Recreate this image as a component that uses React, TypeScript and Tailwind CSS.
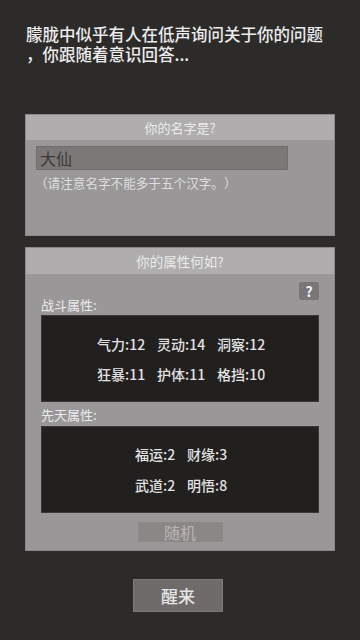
const combat = ["气力:12", "灵动:14", "洞察:12", "狂暴:11", "护体:11", "格挡:10"];
const innate = ["福运:2", "财缘:3", "武道:2", "明悟:8"];

const font = { fontFamily: '"Noto Sans CJK SC", "Noto Sans", sans-serif' };

const App = () => {
  return (
    <div
      className="w-[360px] h-[640px] bg-[#2d2b2a] flex flex-col overflow-hidden [text-spacing-trim:space-all]"
      style={font}
    >
      <p className="pt-[24px] px-[26px] text-[16.5px] leading-[20px] font-medium text-[#ececec]">
        朦胧中似乎有人在低声询问关于你的问题
        <br />
        ，你跟随着意识回答...
      </p>

      {/* name panel */}
      <div className="mt-[50px] mx-[25px] h-[122px] bg-[#999797] border border-[#8a8888] flex flex-col">
        <div className="h-[25px] bg-[#afadad] flex items-center justify-center text-[13px] text-[#ebebeb]">
          你的名字是?
        </div>
        <div className="mt-[6px] ml-[10px] w-[252px] h-[24px] bg-[#7b7877] border border-[#6f6c6b] flex items-center px-[3px] text-[16px] text-[#3b3938]">
          大仙
        </div>
        <p className="mt-[5px] ml-[9px] text-[12.6px] leading-[16px] text-[#dedede]">
          （请注意名字不能多于五个汉字。）
        </p>
      </div>

      {/* attribute panel */}
      <div className="mt-[11px] mx-[25px] bg-[#999797] border border-[#8a8888] flex flex-col px-[15px] pb-[7px]">
        <div className="-mx-[15px] h-[26px] bg-[#afadad] flex items-center justify-center text-[13.5px] text-[#ebebeb]">
          你的属性何如?
        </div>
        <div className="mt-[8px] h-[32px] flex justify-between">
          <span className="self-end text-[13px] leading-[18px] text-[#ebebeb]">战斗属性:</span>
          <span className="w-[20px] h-[18px] bg-[#787676] rounded-[2px] flex items-center justify-center text-[14px] font-bold text-[#f2f2f2]">
            ?
          </span>
        </div>
        <div className="mt-[1px] h-[87px] bg-[#221f1f] border border-[#3a3838] flex flex-col justify-center">
          <div className="pl-[55px] grid grid-cols-[60px_60px_60px] gap-y-[10px] text-[14px] leading-[20px] font-medium text-[#e2e2e2]">
            {combat.map((s) => (
              <span key={s}>{s}</span>
            ))}
          </div>
        </div>
        <span className="mt-[4px] text-[13px] leading-[18px] text-[#ebebeb]">先天属性:</span>
        <div className="mt-[2px] h-[87px] bg-[#221f1f] border border-[#3a3838] flex flex-col justify-center">
          <div className="pl-[93px] grid grid-cols-[52px_52px] gap-y-[11px] text-[14px] leading-[20px] font-medium text-[#e2e2e2]">
            {innate.map((s) => (
              <span key={s}>{s}</span>
            ))}
          </div>
        </div>
        <button className="mt-[8px] self-center w-[87px] h-[22px] bg-[#8c8787] border border-[#9c9898] flex items-center justify-center text-[16px] text-[#b9b5b4]">
          随机
        </button>
      </div>

      <button className="mt-[28px] ml-[133px] w-[90px] h-[33px] bg-[#6f6b6a] border border-[#7d7978] flex items-center justify-center text-[17px] font-medium text-[#e6e6e6]">
        醒来
      </button>
    </div>
  );
};

export default App;
